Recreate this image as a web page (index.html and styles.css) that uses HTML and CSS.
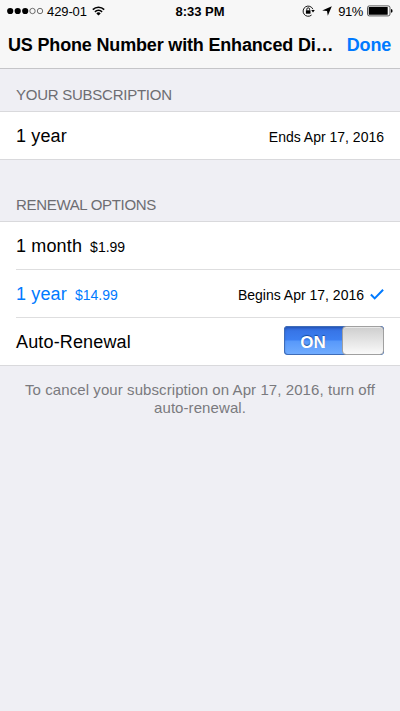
FILE: index.html
```html
<!DOCTYPE html>
<html lang="en">
<head>
    <meta charset="UTF-8">
    <meta name="viewport" content="width=device-width, initial-scale=1.0">
    <title>US Phone Number with Enhanced Dialing</title>
    <link rel="stylesheet" href="styles.css">
</head>
<body>
    <header class="top">
        <div class="status-bar">
            <div class="status-left">
                <svg class="signal" width="37" height="8" viewBox="0 0 37 8">
                    <circle cx="3.2" cy="4" r="3.1"/>
                    <circle cx="10.7" cy="4" r="3.1"/>
                    <circle cx="18.2" cy="4" r="3.1"/>
                    <circle class="empty" cx="25.5" cy="4" r="2.7"/>
                    <circle class="empty" cx="33" cy="4" r="2.7"/>
                </svg>
                <span class="carrier">429-01</span>
                <svg class="wifi" width="13" height="10" viewBox="0 0 13 10">
                    <path class="arc" d="M0.8 3.6 A8.2 8.2 0 0 1 12.2 3.6"/>
                    <path class="arc" d="M2.9 5.8 A5.2 5.2 0 0 1 10.1 5.8"/>
                    <path d="M6.5 9.6 L4.3 7.4 A3.2 3.2 0 0 1 8.7 7.4 Z"/>
                </svg>
            </div>
            <span class="clock">8:33 PM</span>
            <div class="status-right">
                <svg class="lock" width="13" height="12" viewBox="0 0 13 12">
                    <path class="ring" d="M10.9 4.2 A5.1 5.1 0 1 0 9.6 10"/>
                    <path class="arrow" d="M9.2 5 H12.8 L11 7.6 Z"/>
                    <rect x="3.9" y="5.3" width="4.6" height="3.4"/>
                    <path class="ring" d="M4.8 5.4 V4.2 A1.4 1.4 0 0 1 7.6 4.2 V5.4"/>
                </svg>
                <svg class="location" width="10" height="10" viewBox="0 0 10 10">
                    <path d="M9.8 0.2 L5.8 9.8 L5 5.1 L0.2 4.6 Z"/>
                </svg>
                <span class="percent">91%</span>
                <svg class="battery" width="26" height="12" viewBox="0 0 26 12">
                    <rect class="case" x="0.5" y="0.9" width="22.5" height="10" rx="1.8"/>
                    <rect x="1.7" y="2.1" width="19" height="7.6" rx="0.5"/>
                    <path d="M24 4 Q25.6 4.3 25.6 5.9 Q25.6 7.5 24 7.8 Z"/>
                </svg>
            </div>
        </div>
        <div class="nav-bar">
            <h1>US Phone Number with Enhanced Di…</h1>
            <a class="done">Done</a>
        </div>
    </header>

    <main>
        <h2 class="subscription-title">YOUR SUBSCRIPTION</h2>
        <div class="group">
            <div class="row">
                <span class="label">1 year</span>
                <span class="date">Ends Apr 17, 2016</span>
            </div>
        </div>

        <h2 class="renewal-title">RENEWAL OPTIONS</h2>
        <div class="group">
            <div class="row">
                <span class="label">1 month</span>
                <span class="price">$1.99</span>
            </div>
            <div class="row selected">
                <span class="label">1 year</span>
                <span class="price">$14.99</span>
                <span class="date">Begins Apr 17, 2016</span>
                <svg class="check" width="14" height="12" viewBox="0 0 14 12">
                    <path d="M0.9 6.5 L4.7 10.4 L13.1 1.7"/>
                </svg>
            </div>
            <div class="row">
                <span class="label">Auto-Renewal</span>
                <div class="switch">
                    <span class="switch-on">ON</span>
                    <span class="switch-knob"></span>
                </div>
            </div>
        </div>

        <p class="note">To cancel your subscription on Apr 17, 2016, turn off<br>auto-renewal.</p>
    </main>
</body>
</html>
```

FILE: styles.css
```css
* {
    box-sizing: border-box;
}
body {
    margin: 0;
    min-height: 100vh;
    background: #efeff4;
    color: #000;
    font-family: "Liberation Sans", Arial, sans-serif;
}
.top {
    height: 69px;
    background: #f7f7f7;
    border-bottom: 1px solid #c5c5c8;
}
.status-bar {
    display: grid;
    grid-template-columns: 1fr auto 1fr;
    align-items: center;
    height: 22px;
    padding: 0 7px;
}
.status-left,
.status-right {
    display: flex;
    align-items: center;
}
.status-right {
    justify-content: flex-end;
}
.signal .empty {
    fill: none;
    stroke: #333;
    stroke-width: 0.7;
}
.carrier {
    margin-left: 3px;
    font-size: 13px;
    letter-spacing: -0.1px;
}
.wifi {
    margin-left: 5px;
}
.wifi .arc {
    fill: none;
    stroke: #000;
    stroke-width: 1.6;
}
.clock {
    font-size: 13px;
    font-weight: bold;
}
.lock .ring {
    fill: none;
    stroke: #000;
    stroke-width: 0.9;
}
.location {
    margin-left: 7px;
}
.percent {
    margin-left: 6px;
    font-size: 13px;
    letter-spacing: -0.4px;
}
.battery {
    margin-left: 4px;
}
.battery .case {
    fill: none;
    stroke: #333;
    stroke-width: 0.8;
}
.nav-bar {
    display: flex;
    align-items: center;
    justify-content: space-between;
    height: 46px;
    padding: 0 9px 0 8px;
}
h1 {
    margin: 0;
    font-size: 18px;
    letter-spacing: -0.17px;
    white-space: nowrap;
}
.done {
    color: #007aff;
    font-size: 18px;
    font-weight: bold;
    letter-spacing: -0.2px;
}
h2 {
    display: flex;
    align-items: flex-end;
    margin: 0;
    padding: 0 16px 7px;
    color: #6d6d72;
    font-size: 15px;
    font-weight: normal;
    line-height: 18px;
}
.subscription-title {
    height: 42px;
    letter-spacing: -0.25px;
}
.renewal-title {
    height: 61px;
    letter-spacing: -0.32px;
}
.group {
    background: #fff;
    border-top: 1px solid #d9d9dc;
    border-bottom: 1px solid #d9d9dc;
}
.row {
    display: flex;
    align-items: baseline;
    height: 47px;
    margin-left: 16px;
    padding-right: 16px;
    line-height: 48px;
}
.row + .row {
    height: 48px;
    border-top: 1px solid #dededf;
}
.label {
    font-size: 18px;
    letter-spacing: 0.15px;
}
.price {
    margin-left: 8px;
    font-size: 14px;
}
.date {
    margin-left: auto;
    font-size: 14px;
}
.selected {
    color: #007aff;
}
.selected .date {
    color: #000;
}
.check {
    align-self: center;
    margin-left: 6px;
}
.check path {
    fill: none;
    stroke: #007aff;
    stroke-width: 2;
}
.switch {
    display: flex;
    align-self: flex-start;
    width: 100px;
    height: 29px;
    margin-top: 8px;
    margin-left: auto;
    border-radius: 4px;
    background: linear-gradient(#346fe0 0, #3d80f2 49%, #5798fa 51%, #72adff 100%);
    box-shadow: inset 0 0 0 1px #3e6cb8, inset 0 2px 3px rgba(0, 20, 90, 0.4);
}
.switch-on {
    width: 58px;
    color: #fff;
    font-size: 17px;
    font-weight: bold;
    line-height: 33px;
    text-align: center;
    text-shadow: 0 -1px 1px #174b9b;
}
.switch-knob {
    width: 42px;
    border: 1px solid #a0a0a0;
    border-radius: 4px;
    background: linear-gradient(#cecece, #fafafa);
    box-shadow: inset 0 1px 0 #e8e8e8;
}
.note {
    margin: 15px 0 0;
    color: #7a7a7e;
    font-size: 15px;
    letter-spacing: 0.08px;
    line-height: 18px;
    text-align: center;
}
```
